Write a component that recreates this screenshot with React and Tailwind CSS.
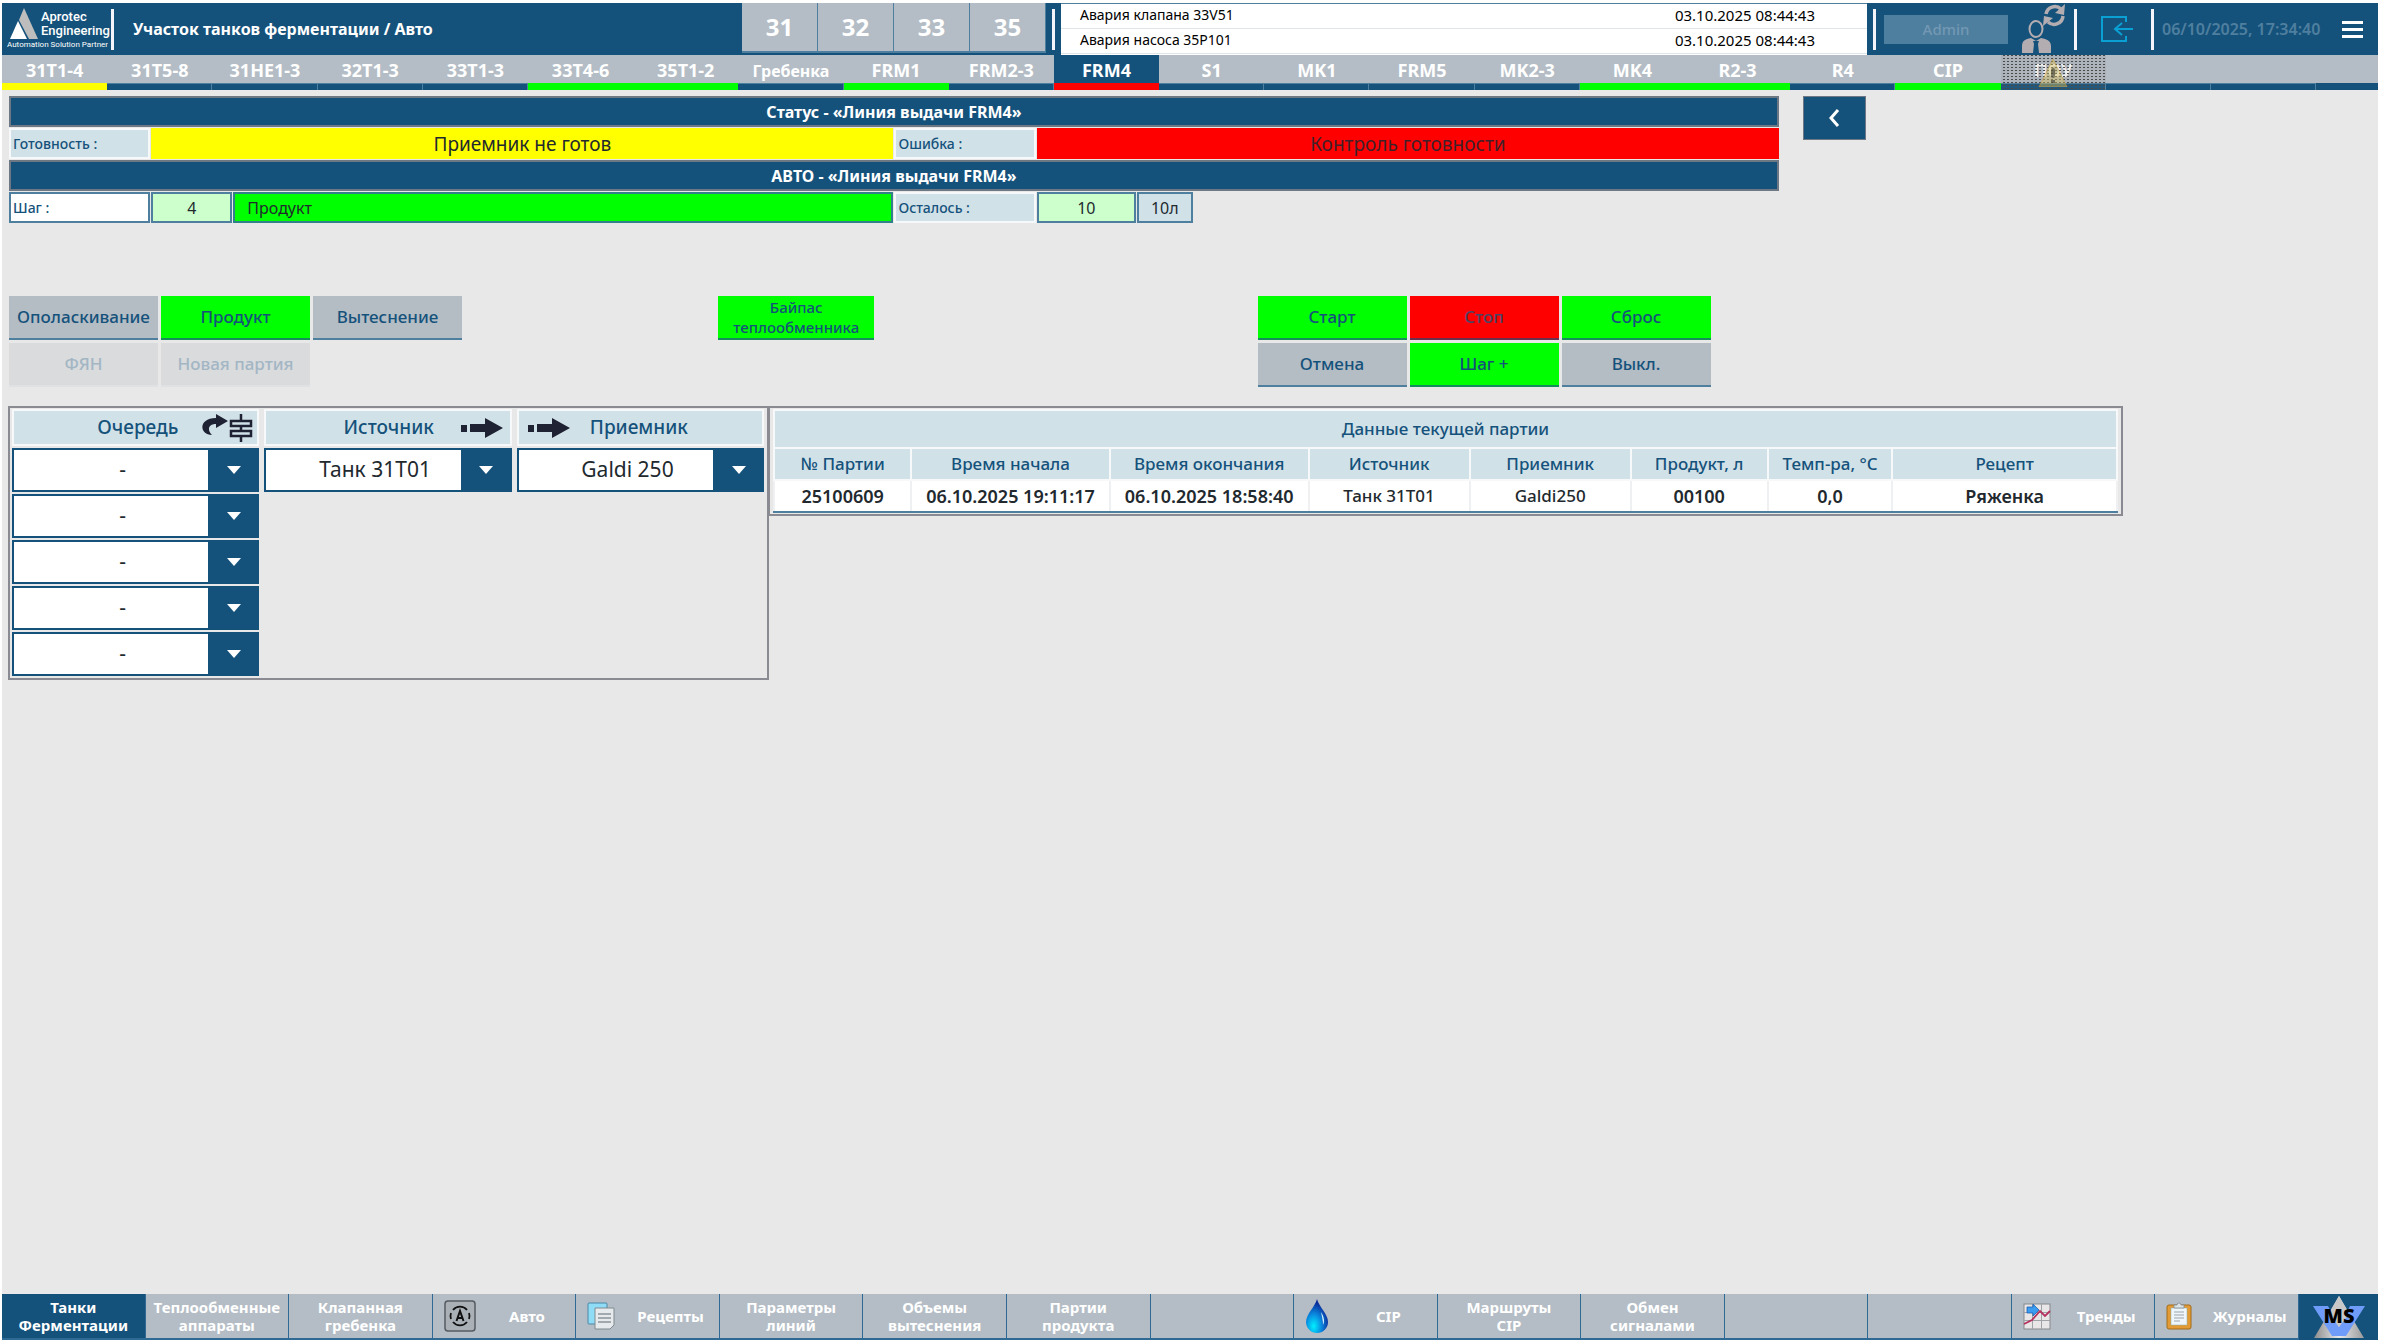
import React, { useState } from 'react';

const TABS = [
  { name: '31T1-4', bar: 'bg-[#ffff00]' },
  { name: '31T5-8' },
  { name: '31HE1-3' },
  { name: '32T1-3' },
  { name: '33T1-3' },
  { name: '33T4-6', bar: 'bg-[#00ff00]' },
  { name: '35T1-2', bar: 'bg-[#00ff00]' },
  { name: 'Гребенка', small: true },
  { name: 'FRM1', bar: 'bg-[#00ff00]' },
  { name: 'FRM2-3' },
  { name: 'FRM4', bar: 'bg-[#ff0000]' },
  { name: 'S1' },
  { name: 'MK1' },
  { name: 'FRM5' },
  { name: 'MK2-3' },
  { name: 'MK4', bar: 'bg-[#00ff00]' },
  { name: 'R2-3', bar: 'bg-[#00ff00]' },
  { name: 'R4' },
  { name: 'CIP', bar: 'bg-[#00ff00]' },
  { name: 'ПОУ', locked: true },
  { name: '' },
  { name: '' },
];

const ALARMS = [
  { text: 'Авария клапана 33V51', time: '03.10.2025 08:44:43' },
  { text: 'Авария насоса 35P101', time: '03.10.2025 08:44:43' },
];

const BATCH = [
  { title: '№ Партии', value: '25100609', width: 'w-[10.2%]' },
  { title: 'Время начала', value: '06.10.2025 19:11:17', width: 'w-[14.8%]' },
  { title: 'Время окончания', value: '06.10.2025 18:58:40', width: 'w-[14.8%]' },
  { title: 'Источник', value: 'Танк 31T01', width: 'w-[12%]', small: true },
  { title: 'Приемник', value: 'Galdi250', width: 'w-[12%]', small: true },
  { title: 'Продукт, л', value: '00100', width: 'w-[10.2%]' },
  { title: 'Темп-ра, °C', value: '0,0', width: 'w-[9.3%]' },
  { title: 'Рецепт', value: 'Ряженка', width: 'w-[16.7%]' },
];

const Divider = () => <div className="w-[3px] h-[41px] bg-[#f4f4fa] shrink-0"></div>;

/* ICONS */
const AprotecMark = () => (
  <svg width="29" height="31" viewBox="0 0 29 31" aria-hidden="true">
    <polygon points="14,0 28,31 19,31 9,12" fill="#bdbdbd" />
    <polygon points="8,13 17,31 0,31" fill="#ffffff" />
  </svg>
);

const UserSwitchIcon = () => (
  <svg width="45" height="50" viewBox="0 0 45 50" aria-hidden="true">
    <ellipse cx="15" cy="25" rx="6.5" ry="8" fill="none" stroke="#b3adb1" strokeWidth="2" />
    <path d="M1 49V42c0-5 3-7 9-8l5 3 5-3c6 1 10 3 10 8v7H18l-1-9 1-3h-6l1 3-1 9z" fill="#b3adb1" />
    <path d="M25 10a9 9 0 0 1 15-5" fill="none" stroke="#b3adb1" strokeWidth="3.5" />
    <polygon points="44,0 43,11 34,9" fill="#b3adb1" />
    <path d="M42 12a9 9 0 0 1-15 6" fill="none" stroke="#b3adb1" strokeWidth="3.5" />
    <polygon points="22,22 23,12 32,14" fill="#b3adb1" />
  </svg>
);

const LogoutIcon = () => (
  <svg width="33" height="26" viewBox="0 0 33 26" fill="none" stroke="#0aa0d4" strokeWidth="2" aria-hidden="true">
    <path d="M25 6V1H1v24h24v-5" />
    <path d="M32 13H15M21 7l-7 6 7 6" />
  </svg>
);

const QueueIcon = () => (
  <svg width="51" height="28" viewBox="0 0 51 28" aria-hidden="true">
    <path d="M10 21C-3 21-4 4 14 4V0l12 7-12 7V10C6 10 5 16 10 21z" fill="#1e2233" />
    <g fill="none" stroke="#1e2233" strokeWidth="2.5">
      <rect x="29" y="7" width="20" height="5" />
      <rect x="29" y="17" width="20" height="5" />
      <path d="M39 0v7M39 12v5M39 22v6" />
    </g>
  </svg>
);

const ArrowIcon = () => (
  <svg width="42" height="20" viewBox="0 0 42 20" fill="#1e2233" aria-hidden="true">
    <rect x="0" y="7" width="6" height="7" />
    <path d="M9 6h15V0l18 10-18 10v-6H9z" />
  </svg>
);

const AutoIcon = () => (
  <svg width="32" height="32" viewBox="0 0 32 32" fill="none" stroke="#333" aria-hidden="true">
    <rect x="1" y="1" width="30" height="30" rx="3" fill="#a9b0b6" strokeWidth="1.5" stroke="#555b60" />
    <path d="M9 10a9 9 0 0 1 14 0M23 22a9 9 0 0 1-14 0M7 19a9 9 0 0 1 0-6M25 19a9 9 0 0 0 0-6" stroke="#111" strokeWidth="1.8" />
    <path d="M12.500 21L16 11l3.500 10M13.500 18h5" stroke="#111" strokeWidth="2" />
  </svg>
);

const RecipesIcon = () => (
  <svg width="28" height="28" viewBox="0 0 28 28" aria-hidden="true">
    <rect x="1" y="1" width="19" height="21" rx="1" fill="#8fdcf7" stroke="#4b87a6" />
    <path d="M8 6h19v17l-4 4H8z" fill="#e6eaec" stroke="#7f8a90" />
    <path d="M11 12h13M11 16h13M11 20h13" stroke="#8a9399" strokeWidth="1.500" />
  </svg>
);

const DropIcon = () => (
  <svg width="24" height="34" viewBox="0 0 24 34" aria-hidden="true">
    <defs>
      <radialGradient id="drop" cx="0.35" cy="0.8" r="0.7">
        <stop offset="0" stopColor="#00f0ff" />
        <stop offset="0.5" stopColor="#0a8be0" />
        <stop offset="1" stopColor="#0a2a9a" />
      </radialGradient>
    </defs>
    <path d="M12 0c2 8 11 15 11 23a11 11 0 0 1-22 0C1 15 10 8 12 0z" fill="url(#drop)" />
    <path d="M16 13c3 5 4 9 2 13 0-5-1-8-2-13z" fill="#d8f4ff" />
  </svg>
);

const TrendsIcon = () => (
  <svg width="28" height="27" viewBox="0 0 28 27" aria-hidden="true">
    <rect x="1" y="1" width="26" height="25" fill="#e9e6e8" stroke="#85898e" />
    <path d="M9.500 1v25M18.500 1v25M1 9.500h26M1 17.500h26" stroke="#9fa3a8" />
    <path d="M1 21l8-4 8-9 5 5 5-5" fill="none" stroke="#b5305c" strokeWidth="1.800" />
    <path d="M4 4h6V1l6 6-6 6v-3H4z" fill="#3b9cf0" stroke="#1c61b0" strokeWidth="0.800" />
  </svg>
);

const JournalIcon = () => (
  <svg width="26" height="28" viewBox="0 0 26 28" aria-hidden="true">
    <rect x="1" y="3" width="24" height="24" rx="2" fill="#e39c35" stroke="#a36a1a" />
    <rect x="5" y="6" width="16" height="17" fill="#eef6fb" stroke="#8aa" strokeWidth="0.500" />
    <path d="M8 5V3h3a2 2 0 0 1 4 0h3v3H8z" fill="#dde3e6" stroke="#7f8a90" strokeWidth="0.800" />
    <path d="M8 10h10M8 13h10M8 16h10M8 19h6" stroke="#9aa5ab" />
  </svg>
);

const MsLogo = () => (
  <svg width="52" height="42" viewBox="0 0 52 42" aria-hidden="true">
    <defs>
      <linearGradient id="ms" x1="0" y1="0" x2="1" y2="0">
        <stop offset="0" stopColor="#8d8d8d" />
        <stop offset="0.5" stopColor="#e8e8e8" />
        <stop offset="1" stopColor="#9a9a9a" />
      </linearGradient>
    </defs>
    <polygon points="26,0 51,42 1,42" fill="url(#ms)" />
    <path d="M0 10h15l11 21 11-21h15L33 40H19z" fill="#6f9cf8" />
    <polygon points="26,0 36,18 26,31 16,18" fill="#c8c8c8" />
    <text x="26" y="27" textAnchor="middle" fontSize="20" className="font-black" fill="#000">MS</text>
  </svg>
);

const FOOTER = [
  { lines: ['Танки', 'Ферментации'], active: true },
  { lines: ['Теплообменные', 'аппараты'] },
  { lines: ['Клапанная', 'гребенка'] },
  { lines: ['Авто'], icon: <AutoIcon /> },
  { lines: ['Рецепты'], icon: <RecipesIcon /> },
  { lines: ['Параметры', 'линий'] },
  { lines: ['Объемы', 'вытеснения'] },
  { lines: ['Партии', 'продукта'] },
  { lines: [] },
  { lines: ['CIP'], icon: <DropIcon /> },
  { lines: ['Маршруты', 'CIP'] },
  { lines: ['Обмен', 'сигналами'] },
  { lines: [] },
  { lines: [] },
  { lines: ['Тренды'], icon: <TrendsIcon /> },
  { lines: ['Журналы'], icon: <JournalIcon /> },
];

const BUTTON_COLORS = {
  gray: 'bg-[#b4bcc4] border-[#4f7f9f] text-[#15527b]',
  green: 'bg-[#00ff00] border-[#148c5c] text-[#15527b]',
  red: 'bg-[#ff0000] border-[#6a3050] text-[#4a4464]',
  off: 'bg-[#d9dbdd] border-[#dfe1e2] text-[#a3b6c4]',
};

const CommandButton = ({ children, color = 'gray', wide }) => (
  <button
    type="button"
    disabled={color === 'off'}
    className={`h-11 border-b-2 font-medium whitespace-nowrap ${wide ? 'w-[156px] text-[15px] leading-[20px]' : 'w-[149px] text-[17px] leading-[24px]'} ${BUTTON_COLORS[color]}`}
  >
    {children}
  </button>
);

const Combo = ({ label, options }) => {
  const [value, setValue] = useState(options[0]);

  return (
    <div className="relative h-11">
      <select
        aria-label={label}
        value={value}
        onChange={(e) => setValue(e.target.value)}
        className="w-full h-full appearance-none bg-white border-2 border-[#15527b] pl-6 pr-[50px] text-[21px] text-[#22292e] text-center [text-align-last:center] rounded-none"
      >
        {options.map((option) => (
          <option key={option}>{option}</option>
        ))}
      </select>
      <div className="absolute right-0 top-0 h-full w-[51px] bg-[#15527b] flex items-center justify-center pointer-events-none">
        <svg width="14" height="8" viewBox="0 0 14 8" aria-hidden="true">
          <polygon points="0,0 14,0 7,8" fill="#fff" />
        </svg>
      </div>
    </div>
  );
};

const SectionTitle = ({ children }) => (
  <h2 className="h-[31px] bg-[#15527b] border-2 border-[#6d7884] text-white text-[16px] font-bold flex items-center justify-center">
    {children}
  </h2>
);

const LabelCell = ({ children, white }) => (
  <div
    className={`h-[31px] pl-[2px] flex items-center text-[14px] font-medium text-[#15527b] border-2 ${
      white ? 'bg-white border-[#4f7f9f]' : 'bg-[#d1e1e8] border-[#f6f8f9]'
    }`}
  >
    {children}
  </div>
);

const App = () => {
  return (
    <div className="min-h-screen bg-white pt-[3px] pb-[2px] pl-[2px] pr-[3px] flex flex-col font-['Noto_Sans','Open_Sans',sans-serif]">
      {/* HEADER */}
      <header className="h-[52px] bg-[#15527b] flex items-center">
        <div className="w-[109px] pl-[5px] text-white shrink-0 font-['Roboto','Inter',sans-serif]">
          <div className="flex items-start gap-[2px] pl-[3px]">
            <AprotecMark />
            <div className="pt-[2px] text-[13px] leading-[14px] font-medium">
              <div>Aprotec</div>
              <div>Engineering</div>
            </div>
          </div>
          <div className="text-[8px] leading-[12px] whitespace-nowrap">Automation Solution Partner</div>
        </div>
        <Divider />
        <h1 className="pl-[19px] text-white text-[16px] font-bold whitespace-nowrap">
          Участок танков ферментации / Авто
        </h1>
        <div className="ml-auto h-full flex items-center">
          <nav className="flex self-start">
            {['31', '32', '33', '35'].map((n) => (
              <button
                key={n}
                type="button"
                className="w-[76px] h-[50px] bg-[#b4bdc5] border-r border-b-2 border-[#4f7f9f] text-white text-[24px] font-bold"
              >
                {n}
              </button>
            ))}
          </nav>
          <div className="pl-[6px] pr-[6px]">
            <Divider />
          </div>
          <div className="w-[806px] h-full bg-white border-t border-[#4f7f9f]">
            {ALARMS.map((alarm) => (
              <div
                key={alarm.text}
                className="h-[25px] border-b border-[#dfe6ea] pl-[19px] pr-[52px] pb-[2px] flex items-center justify-between leading-[20px] text-black"
              >
                <span className="text-[14px]">{alarm.text}</span>
                <span className="text-[15px]">{alarm.time}</span>
              </div>
            ))}
          </div>
          <div className="flex items-center pl-[6px]">
            <Divider />
            <button type="button" disabled className="ml-2 w-[124px] h-[29px] bg-[#4f7f9f] text-[#7398b3] text-[15px] font-medium">
              Admin
            </button>
            <button type="button" aria-label="Смена пользователя" className="ml-[13px] mr-[8px]">
              <UserSwitchIcon />
            </button>
            <Divider />
            <button type="button" aria-label="Выход" className="ml-6 mr-[17px]">
              <LogoutIcon />
            </button>
            <Divider />
            <span className="w-[188px] pl-[8px] text-[16px] font-semibold text-[#4f7f9f] whitespace-nowrap">
              06/10/2025, 17:34:40
            </span>
            <button type="button" aria-label="Меню" className="mr-[15px] flex flex-col gap-1">
              <span className="block w-[21px] h-[3px] bg-white"></span>
              <span className="block w-[21px] h-[3px] bg-white"></span>
              <span className="block w-[21px] h-[3px] bg-white"></span>
            </button>
          </div>
        </div>
      </header>

      {/* UNIT TABS */}
      <nav className="flex h-[35px]">
        {TABS.map((tab, idx) => (
          <button
            key={idx}
            type="button"
            disabled={tab.locked}
            aria-label={tab.name || 'Резерв'}
            className={`relative flex-1 flex flex-col text-white font-bold ${tab.small ? 'text-[16px]' : 'text-[18px]'}`}
          >
            <span
              className={`w-full h-[28px] pt-[3px] flex items-center justify-center ${
                tab.name === 'FRM4' ? 'bg-[#15527b]' : 'bg-[#b4bdc5]'
              }`}
            >
              {tab.name}
            </span>
            <span
              className={`w-full h-[7px] ${tab.bar || 'bg-[#15527b] border-t border-r border-[#4f7f9f]'}`}
            ></span>
            {tab.locked && (
              <span className="absolute inset-0 flex items-center justify-center bg-[#808080]/15 bg-[conic-gradient(#4a4a4a_25%,transparent_0)] bg-size-[4px_3px]">
                <svg width="30" height="28" viewBox="0 0 30 28" aria-hidden="true">
                  <polygon points="15,0 29,28 1,28" fill="#e0c860" fillOpacity="0.4" stroke="#c9a040" strokeOpacity="0.6" />
                  <rect x="13" y="9" width="4" height="10" rx="2" fill="#3a3a30" fillOpacity="0.6" />
                  <rect x="13" y="21" width="4" height="3" fill="#3a3a30" fillOpacity="0.6" />
                </svg>
              </span>
            )}
          </button>
        ))}
        <div className="w-[62px] border-b-[7px] border-[#15527b] bg-[#b4bdc5]"></div>
      </nav>

      <main className="flex-1 bg-[#e8e8e8] pt-[6px] px-[6px]">
        {/* LINE STATUS */}
        <div className="flex gap-6 pl-[1px]">
          <section className="w-[74.9%] flex flex-col gap-px">
            <SectionTitle>Статус - «Линия выдачи FRM4»</SectionTitle>
            <div className="grid grid-cols-[8fr_42fr_8fr_42fr] gap-px">
              <LabelCell>Готовность :</LabelCell>
              <div className="bg-[#ffff00] text-[#22292e] text-[19px] leading-[24px] flex items-center justify-center">
                Приемник не готов
              </div>
              <LabelCell>Ошибка :</LabelCell>
              <div className="bg-[#ff0000] text-[#40202a] text-[19px] leading-[24px] flex items-center justify-center">
                Контроль готовности
              </div>
            </div>
            <SectionTitle>АВТО - «Линия выдачи FRM4»</SectionTitle>
            <div className="grid grid-cols-[8fr_42fr_8fr_42fr] gap-px">
              <LabelCell white>Шаг :</LabelCell>
              <div className="flex gap-px">
                <div className="w-[81px] bg-[#ccffcc] border-2 border-[#4f7f9f] text-[#22292e] text-[16px] flex items-center justify-center">
                  4
                </div>
                <div className="flex-1 bg-[#00ff00] border-2 border-[#32808a] pl-3 text-[#22292e] text-[16px] flex items-center">
                  Продукт
                </div>
              </div>
              <LabelCell>Осталось :</LabelCell>
              <div className="flex gap-px">
                <div className="w-[99px] bg-[#ccffcc] border-2 border-[#4f7f9f] text-[#22292e] text-[16px] flex items-center justify-center">
                  10
                </div>
                <div className="w-[56px] bg-[#d1e1e8] border-2 border-[#4f7f9f] text-[#22292e] text-[16px] flex items-center justify-center">
                  10л
                </div>
              </div>
            </div>
          </section>
          <button
            type="button"
            aria-label="Назад"
            className="w-[63px] h-11 bg-[#15527b] border border-[#6d7884] flex items-center justify-center"
          >
            <svg width="12" height="18" viewBox="0 0 12 18" fill="none" stroke="#fff" strokeWidth="3" aria-hidden="true">
              <path d="M10 1L3 9l7 8" />
            </svg>
          </button>
        </div>

        {/* COMMANDS */}
        <div className="flex items-start pt-[73px] pl-[1px]">
          <div className="flex flex-col gap-[3px]">
            <div className="flex gap-[3px]">
              <CommandButton>Ополаскивание</CommandButton>
              <CommandButton color="green">Продукт</CommandButton>
              <CommandButton>Вытеснение</CommandButton>
            </div>
            <div className="flex gap-[3px]">
              <CommandButton color="off">ФЯН</CommandButton>
              <CommandButton color="off">Новая партия</CommandButton>
            </div>
          </div>
          <div className="flex-[256]"></div>
          <CommandButton color="green" wide>
            <span className="block">Байпас</span>
            <span className="block">теплообменника</span>
          </CommandButton>
          <div className="flex-[383]"></div>
          <div className="grid grid-cols-3 gap-[3px]">
            <CommandButton color="green">Старт</CommandButton>
            <CommandButton color="red">Стоп</CommandButton>
            <CommandButton color="green">Сброс</CommandButton>
            <CommandButton>Отмена</CommandButton>
            <CommandButton color="green">Шаг +</CommandButton>
            <CommandButton>Выкл.</CommandButton>
          </div>
          <div className="flex-[661]"></div>
        </div>

        <div className="flex items-start pt-[19px]">
          {/* ROUTE SELECTION */}
          <section className="w-[32.2%] shrink-0 border-2 border-[#8a8a92] pl-[2px] pr-[3px] pt-px pb-[2px] grid grid-cols-3 gap-[5px]">
            <div className="flex flex-col gap-[2px]">
              <div className="h-[37px] bg-[#d1e1e8] border-2 border-[#f6f8f9] pr-1 flex items-center justify-end gap-[24px]">
                <h3 className="text-[19px] font-medium text-[#15527b]">Очередь</h3>
                <QueueIcon />
              </div>
              {[1, 2, 3, 4, 5].map((n) => (
                <Combo key={n} label={`Очередь ${n}`} options={['-']} />
              ))}
            </div>
            <div className="flex flex-col gap-[2px]">
              <div className="h-[37px] bg-[#d1e1e8] border-2 border-[#f6f8f9] pr-[7px] flex items-center justify-end gap-[27px]">
                <h3 className="text-[19px] font-medium text-[#15527b]">Источник</h3>
                <ArrowIcon />
              </div>
              <Combo label="Источник" options={['Танк 31T01']} />
            </div>
            <div className="flex flex-col gap-[2px]">
              <div className="h-[37px] bg-[#d1e1e8] border-2 border-[#f6f8f9] pl-[9px] flex items-center gap-[20px]">
                <ArrowIcon />
                <h3 className="text-[19px] font-medium text-[#15527b]">Приемник</h3>
              </div>
              <Combo label="Приемник" options={['Galdi 250']} />
            </div>
          </section>

          {/* CURRENT BATCH */}
          <section className="w-[57.3%] -ml-px border-2 border-[#8a8a92] px-[3px] pt-px pb-px">
            <table className="w-full table-fixed border-collapse">
              <colgroup>
                {BATCH.map((col) => (
                  <col key={col.title} className={col.width} />
                ))}
              </colgroup>
              <thead>
                <tr>
                  <th colSpan={8} className="h-[38px] p-0 bg-[#d1e1e8] border-2 border-[#f6f8f9] text-[17px] leading-[24px] font-medium text-[#15527b]">
                    Данные текущей партии
                  </th>
                </tr>
                <tr>
                  {BATCH.map((col) => (
                    <th
                      key={col.title}
                      className="h-[32px] p-0 bg-[#d1e1e8] border-2 border-[#f6f8f9] text-[17px] leading-[24px] font-medium text-[#15527b] whitespace-nowrap"
                    >
                      {col.title}
                    </th>
                  ))}
                </tr>
              </thead>
              <tbody>
                <tr>
                  {BATCH.map((col) => (
                    <td
                      key={col.title}
                      className={`h-[32px] p-0 bg-white border-x-2 border-x-[#eef0f1] border-b-2 border-b-[#4f7f9f] text-center leading-[24px] text-[#22292e] whitespace-nowrap ${
                        col.small ? 'text-[17px] font-medium' : 'text-[18px] font-semibold'
                      }`}
                    >
                      {col.value}
                    </td>
                  ))}
                </tr>
              </tbody>
            </table>
          </section>
        </div>
      </main>

      {/* BOTTOM NAVIGATION */}
      <footer className="flex h-[46px]">
        <nav className="flex flex-1">
          {FOOTER.map((item, idx) => (
            <button
              key={idx}
              type="button"
              aria-label={item.lines.join(' ') || 'Резерв'}
              className={`flex-1 basis-0 min-w-0 flex items-center border-r border-b-2 border-[#2f6a94] text-white text-[15px] leading-[18px] font-bold ${
                item.active ? 'bg-[#15527b]' : 'bg-[#b4bdc5]'
              }`}
            >
              {item.icon && <span className="w-[42px] pl-[11px] shrink-0">{item.icon}</span>}
              <span className={`flex-1 ${item.icon ? 'pl-1' : ''}`}>
                {item.lines.map((line) => (
                  <span key={line} className="block whitespace-nowrap">{line}</span>
                ))}
              </span>
            </button>
          ))}
        </nav>
        <div className="w-[79px] bg-[#15527b] flex items-center justify-center">
          <MsLogo />
        </div>
      </footer>
    </div>
  );
};

export default App;
